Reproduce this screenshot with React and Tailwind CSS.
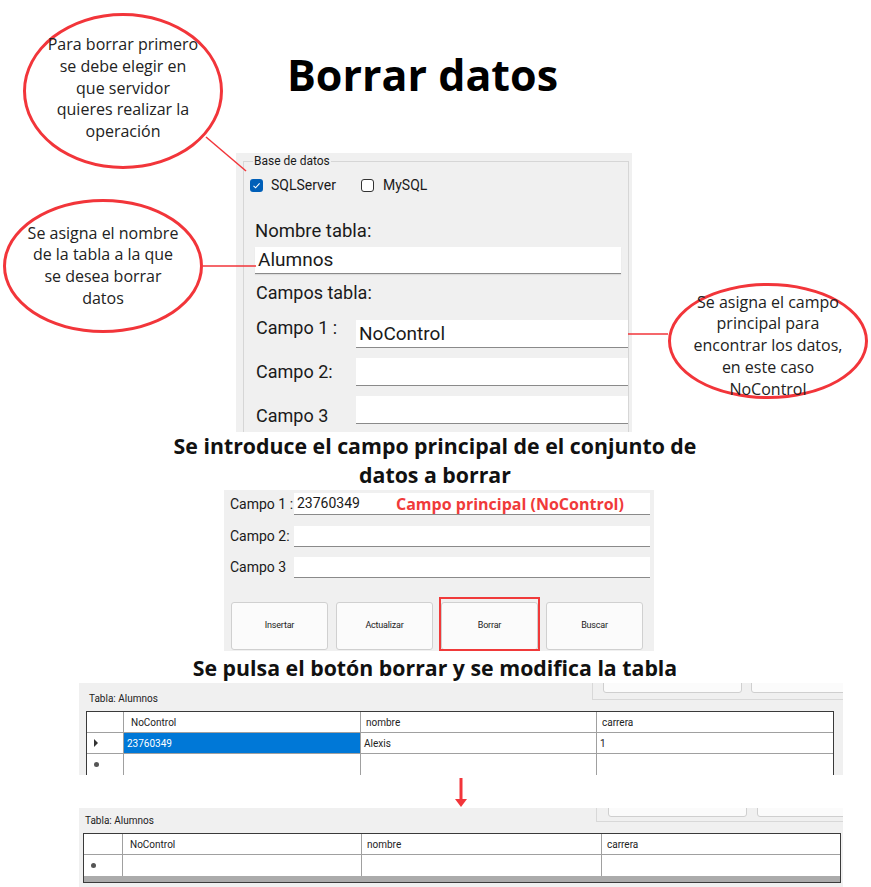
const bubbleText = "font-['Open_Sans',sans-serif] text-[16px] leading-[21.7px] text-[#222] text-center whitespace-nowrap";
const winFont = "font-['Roboto',sans-serif]";

function Bubble({ className, lines }) {
    return (
        <div className={`absolute rounded-[50%] border-[3px] border-[#f2353a] bg-white flex flex-col items-center justify-center ${className}`}>
            <div className={bubbleText}>
                {lines.map((l, i) => <div key={i}>{l}</div>)}
            </div>
        </div>
    );
}

function Check({ checked }) {
    return checked ? (
        <span className="w-[13px] h-[13px] rounded-[3px] bg-[#005fb8] flex items-center justify-center">
            <svg width="9" height="9" viewBox="0 0 9 9"><path d="M1.5 4.8 L3.6 6.8 L7.6 2.4" fill="none" stroke="white" strokeWidth="1.1" /></svg>
        </span>
    ) : (
        <span className="w-[13px] h-[13px] rounded-[3px] border border-[#333] bg-white" />
    );
}

function WinButton({ label }) {
    return (
        <div className="w-[97px] h-[48px] rounded-[3px] border border-[#d0d0d0] bg-[#fbfbfb] flex items-center justify-center text-[9px] tracking-[-0.2px] text-[#222]">
            {label}
        </div>
    );
}

function Grid({ first, cols }) {
    return (
        <div className={`border border-[#3a3a3a] bg-white text-[10px] text-[#222] ${winFont}`}>
            <div className={`grid ${cols} h-[21px] border-b border-[#a0a0a0]`}>
                <div className="border-r border-[#a0a0a0]" />
                <div className="border-r border-[#a0a0a0] flex items-center pl-[7px]">NoControl</div>
                <div className="border-r border-[#a0a0a0] flex items-center pl-[5px]">nombre</div>
                <div className="flex items-center pl-[5px]">carrera</div>
            </div>
            {first && (
                <div className={`grid ${cols} h-[21px] border-b border-[#a0a0a0]`}>
                    <div className="border-r border-[#a0a0a0] flex items-center pl-[6px]">
                        <svg width="6" height="8" viewBox="0 0 6 8"><path d="M1 0 L5 4 L1 8 Z" fill="#333" /></svg>
                    </div>
                    <div className="border-r border-[#a0a0a0] bg-[#0078d7] text-white flex items-center pl-[3px]">23760349</div>
                    <div className="border-r border-[#a0a0a0] flex items-center pl-[3px]">Alexis</div>
                    <div className="flex items-center pl-[3px]">1</div>
                </div>
            )}
            <div className={`grid ${cols} h-[21px]`}>
                <div className="border-r border-[#a0a0a0] flex items-center pl-[7px]">
                    <span className="w-[5px] h-[5px] rounded-full bg-[#555]" />
                </div>
                <div className="border-r border-[#a0a0a0]" />
                <div className="border-r border-[#a0a0a0]" />
                <div />
            </div>
            {!first && <div className="h-[6px] bg-[#ababab]" />}
        </div>
    );
}

export default function App() {
    return (
        <div className="relative w-[871px] h-[887px] bg-white overflow-hidden">
            {/* Title */}
            <div className="pt-[50px] w-[845px] text-center font-['Open_Sans',sans-serif] font-bold text-[43px] leading-[50px] text-black">
                Borrar datos
            </div>

            {/* Form screenshot 1 */}
            <div className={`ml-[236px] mt-[53px] w-[396px] h-[279px] bg-[#f0f0f0] pl-[7px] pr-[3px] overflow-hidden text-[#1a1a1a] ${winFont}`}>
                <fieldset className="border border-b-0 border-[#d6d6d6] h-[300px] p-0 m-0">
                    <legend className="ml-[9px] px-[1px] text-[12px] leading-[16px]">Base de datos</legend>
                    <div className="flex items-center h-[18px] mt-[7px] pl-[6px] text-[14px]">
                        <Check checked />
                        <span className="ml-[8px] w-[90px]">SQLServer</span>
                        <Check />
                        <span className="ml-[9px]">MySQL</span>
                    </div>
                    <div className="ml-[11px] mt-[27px] text-[18.5px] leading-[20px]">Nombre tabla:</div>
                    <div className="ml-[11px] mt-[6px] w-[366px] h-[27px] bg-white border-b border-[#8a8a8a] shadow-[0_1px_1px_rgba(0,0,0,0.08)] flex items-center pl-[3px] text-[19px]">
                        Alumnos
                    </div>
                    <div className="ml-[12px] mt-[9px] text-[18px] leading-[20px]">Campos tabla:</div>
                    <div className="flex items-start ml-[12px] mt-[15px] text-[18px] leading-[20px]">
                        <span className="w-[100px]">Campo 1 :</span>
                        <div className="mt-[2px] flex-1 h-[28px] bg-white border-b border-[#8a8a8a] flex items-center pl-[3px] text-[19px]">NoControl</div>
                    </div>
                    <div className="flex items-start ml-[12px] mt-[10px] text-[18px] leading-[20px]">
                        <span className="w-[100px] mt-[4px]">Campo 2:</span>
                        <div className="flex-1 h-[28px] bg-white border-b border-[#8a8a8a]" />
                    </div>
                    <div className="flex items-start ml-[12px] mt-[10px] text-[18px] leading-[20px]">
                        <span className="w-[100px] mt-[10px]">Campo 3</span>
                        <div className="flex-1 h-[28px] bg-white border-b border-[#8a8a8a]" />
                    </div>
                </fieldset>
            </div>

            {/* Heading 2 */}
            <div className="-mt-[1px] w-[870px] text-center font-['Open_Sans',sans-serif] font-bold text-[21.3px] leading-[29px] text-[#111]">
                Se introduce el campo principal de el conjunto de<br />datos a borrar
            </div>

            {/* Form screenshot 2 */}
            <div className={`mt-[1px] ml-[224px] w-[430px] h-[161px] bg-[#f0f0f0] pl-[6px] pt-[3px] text-[#1a1a1a] ${winFont}`}>
                <div className="flex items-center text-[14px]">
                    <span className="w-[64px]">Campo 1 :</span>
                    <div className="w-[356px] h-[22px] bg-white border-b border-[#8a8a8a] flex items-center pl-[3px]">
                        <span className="w-[99px]">23760349</span>
                        <span className="font-['Open_Sans',sans-serif] font-bold text-[16px] text-[#f03a3a]">Campo principal (NoControl)</span>
                    </div>
                </div>
                <div className="flex items-center mt-[11px] text-[14px]">
                    <span className="w-[64px]">Campo 2:</span>
                    <div className="w-[356px] h-[21px] bg-white border-b border-[#8a8a8a]" />
                </div>
                <div className="flex items-center mt-[10px] text-[14px]">
                    <span className="w-[64px]">Campo 3</span>
                    <div className="w-[356px] h-[21px] bg-white border-b border-[#8a8a8a]" />
                </div>
                <div className="flex gap-[8px] mt-[24px] pl-[1px]">
                    <WinButton label="Insertar" />
                    <WinButton label="Actualizar" />
                    <div className="relative">
                        <WinButton label="Borrar" />
                        <span className="absolute -top-[5px] -left-[2px] -right-[2px] -bottom-[1px] border-2 border-[#f03a3a]" />
                    </div>
                    <WinButton label="Buscar" />
                </div>
            </div>

            {/* Heading 3 */}
            <div className="mt-[2px] w-[870px] text-center font-['Open_Sans',sans-serif] font-bold text-[21.3px] leading-[30px] text-[#111]">
                Se pulsa el botón borrar y se modifica la tabla
            </div>

            {/* Table before */}
            <div className={`relative ml-[79px] w-[764px] h-[92px] bg-[#f0f0f0] overflow-hidden pt-[10px] pl-[7px] ${winFont}`}>
                <div className="absolute left-[513px] top-0 w-[251px] h-[17px] border-l border-b border-[#d8d8d8]" />
                <div className="absolute left-[524px] -top-[4px] w-[139px] h-[14px] rounded-[3px] border border-[#cfcfcf] bg-[#fbfbfb]" />
                <div className="absolute left-[672px] -top-[4px] w-[100px] h-[14px] rounded-[3px] border border-[#cfcfcf] bg-[#fbfbfb]" />
                <div className="pl-[3px] text-[10px] leading-[12px] text-[#222]">Tabla: Alumnos</div>
                <div className="mt-[6px] w-[748px]">
                    <Grid first cols="grid-cols-[37px_237px_236px_1fr]" />
                </div>
            </div>

            {/* Arrow gap */}
            <div className="h-[33px]" />

            {/* Table after */}
            <div className={`relative ml-[79px] w-[764px] h-[79px] bg-[#f0f0f0] overflow-hidden pt-[7px] pl-[4px] ${winFont}`}>
                <div className="absolute left-[517px] top-0 w-[247px] h-[14px] border-l border-b border-[#d8d8d8]" />
                <div className="absolute left-[529px] -top-[4px] w-[139px] h-[13px] rounded-[3px] border border-[#cfcfcf] bg-[#fbfbfb]" />
                <div className="absolute left-[678px] -top-[4px] w-[100px] h-[13px] rounded-[3px] border border-[#cfcfcf] bg-[#fbfbfb]" />
                <div className="pl-[2px] text-[10px] leading-[12px] text-[#222]">Tabla: Alumnos</div>
                <div className="mt-[6px] w-[758px]">
                    <Grid cols="grid-cols-[39px_239px_240px_1fr]" />
                </div>
            </div>

            {/* Connectors and arrow */}
            <svg className="absolute left-0 top-0 pointer-events-none" width="871" height="887">
                <line x1="206" y1="137" x2="246" y2="171" stroke="#f2353a" strokeWidth="1.5" />
                <line x1="203" y1="266" x2="256" y2="266" stroke="#f2353a" strokeWidth="1.5" />
                <line x1="628" y1="334" x2="668" y2="334" stroke="#f2353a" strokeWidth="1.5" />
                <line x1="461" y1="778" x2="461" y2="800" stroke="#f2353a" strokeWidth="3" />
                <path d="M455 799 L467 799 L461 807 Z" fill="#f2353a" />
            </svg>

            {/* Annotation bubbles */}
            <Bubble
                className="left-[23px] top-[13px] w-[200px] h-[156px] pb-[5px]"
                lines={['Para borrar primero', 'se debe elegir en', 'que servidor', 'quieres realizar la', 'operación']}
            />
            <Bubble
                className="left-[3px] top-[199px] w-[200px] h-[134px]"
                lines={['Se asigna el nombre', 'de la tabla a la que', 'se desea borrar', 'datos']}
            />
            <Bubble
                className="left-[668px] top-[283px] w-[200px] h-[116px] pt-[10px]"
                lines={['Se asigna el campo', 'principal para', 'encontrar los datos,', 'en este caso', 'NoControl']}
            />
        </div>
    );
}
